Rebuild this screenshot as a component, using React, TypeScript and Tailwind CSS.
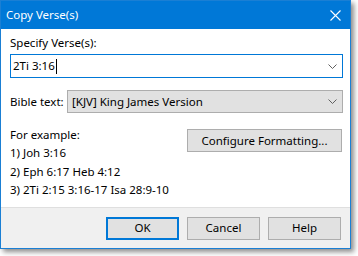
import React from "react";

const Chevron = () => (
  <svg width="9" height="5" viewBox="0 0 9 5" className="block">
    <path d="M0.5 0.5 L4.5 4.5 L8.5 0.5" fill="none" stroke="#606060" strokeWidth="1" />
  </svg>
);

export default function App() {
  return (
    <div
      className="w-[358px] h-[256px] bg-white overflow-hidden text-[11.5px] text-black"
      style={{ fontFamily: '"Noto Sans", "Segoe UI", sans-serif' }}
    >
      <div className="w-[351px] h-[249px] border border-[#1a7fd4] flex flex-col shadow-[3px_3px_5px_rgba(0,0,0,0.45)] bg-white">
        {/* Title bar */}
        <div className="h-[28px] bg-[#0078d7] flex items-center justify-between pl-[5px] pr-[9px] shrink-0">
          <span className="text-white text-[11.5px] leading-none">Copy Verse(s)</span>
          <svg width="11" height="11" viewBox="0 0 11 11">
            <path d="M0.5 0.5 L10.5 10.5 M10.5 0.5 L0.5 10.5" stroke="white" strokeWidth="1.1" />
          </svg>
        </div>
        {/* Body */}
        <div className="flex-1 flex flex-col pl-[9px] pr-[7px]">
          <div className="mt-[6px] leading-[16px] h-[16px]">Specify Verse(s):</div>
          <div className="mt-[3px] h-[24px] border border-[#0078d7] flex items-center justify-between pl-[2px] pr-[5px]">
            <span className="flex items-center leading-none">
              2Ti 3:16<span className="inline-block w-[1px] h-[15px] bg-black ml-[1px]" />
            </span>
            <Chevron />
          </div>
          <div className="mt-[12px] flex items-center">
            <span className="w-[57px] leading-none">Bible text:</span>
            <div className="flex-1 h-[23px] bg-[#e1e1e1] border border-[#adadad] flex items-center justify-between pl-[4px] pr-[5px]">
              <span className="leading-none">[KJV] King James Version</span>
              <Chevron />
            </div>
          </div>
          <div className="mt-[13px] flex justify-between">
            <div className="flex flex-col leading-[18.4px]">
              <span>For example:</span>
              <span>1) Joh 3:16</span>
              <span>2) Eph 6:17 Heb 4:12</span>
              <span>3) 2Ti 2:15 3:16-17 Isa 28:9-10</span>
            </div>
            <div className="mt-[3px] mr-[1px] w-[155px] h-[23px] bg-[#e1e1e1] border border-[#adadad] flex items-center justify-center leading-none">
              Configure Formatting...
            </div>
          </div>
        </div>
        {/* Footer */}
        <div className="h-[41px] bg-[#f0f0f0] border-t border-[#dfdfdf] flex items-center justify-end gap-[8px] pr-[9px] shrink-0">
          <div className="w-[73px] h-[23px] bg-[#e1e1e1] border-2 border-[#0078d7] flex items-center justify-center leading-none">
            OK
          </div>
          <div className="w-[73px] h-[23px] bg-[#e1e1e1] border border-[#adadad] flex items-center justify-center leading-none">
            Cancel
          </div>
          <div className="w-[73px] h-[23px] bg-[#e1e1e1] border border-[#adadad] flex items-center justify-center leading-none">
            Help
          </div>
        </div>
      </div>
    </div>
  );
}
